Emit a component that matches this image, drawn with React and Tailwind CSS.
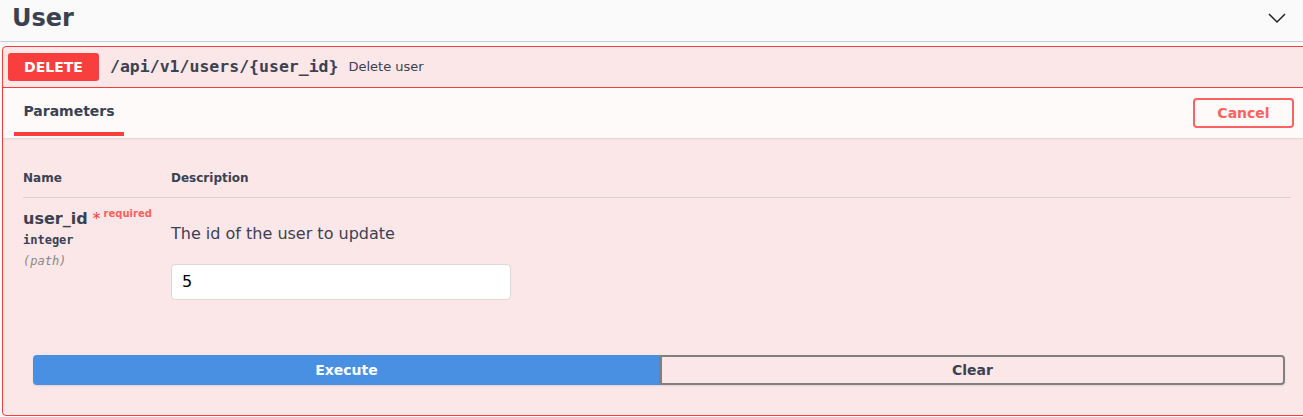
export default function App() {
  const sans = { fontFamily: '"DejaVu Sans", sans-serif' };
  const mono = { fontFamily: '"DejaVu Sans Mono", monospace' };
  return (
    <div className="w-[1303px] h-[417px] overflow-hidden bg-white text-[#3b4151]" style={sans}>
      <div className="h-[42px] bg-[#fafafa] flex items-center justify-between pl-[12px] pr-[16px] border-b border-[#c9cacd]">
        <h2 className="text-[24px] font-bold leading-none -mt-[6px]">User</h2>
        <svg width="20" height="20" viewBox="0 0 20 20" className="-mt-[6px]">
          <polyline points="2,6 10,14 18,6" fill="none" stroke="#222" strokeWidth="1.5" />
        </svg>
      </div>
      <div className="bg-[#fafafa] pt-[4px] w-[1320px]">
        <div className="ml-[2px] w-[1310px] border border-[#f93e3e] rounded-l-[4px] bg-[#fbe7e7]">
          <div className="h-[41px] flex items-center px-[5px] border-b border-[#f93e3e]">
            <div className="w-[91px] h-[28px] rounded-[3px] bg-[#f93e3e] text-white text-[14px] font-bold flex items-center justify-center">
              DELETE
            </div>
            <span className="ml-[11px] text-[16.5px] font-bold" style={mono}>/api/v1/users/{"{user_id}"}</span>
            <span className="ml-[10px] text-[13px]">Delete user</span>
          </div>
          <div className="h-[50px] w-[1300px] bg-[#fffafa] flex items-end justify-between pl-[11px] pr-[9px] shadow-[0_1px_2px_rgba(0,0,0,0.1)]">
            <div className="flex flex-col items-center">
              <span className="px-[9px] text-[14px] font-bold">Parameters</span>
              <div className="mt-[10px] mb-[2px] w-[110px] h-[4px] bg-[#f93e3e]" />
            </div>
            <button className="self-center w-[101px] h-[30px] border-2 border-[#ff6060] rounded-[4px] text-[#ff6060] text-[14px] font-bold bg-transparent" style={sans}>
              Cancel
            </button>
          </div>
          <div className="px-[20px] pt-[31px]">
            <div className="flex text-[12px] font-bold pb-[10px] border-b border-[#d8d2d4]">
              <div className="w-[148px]">Name</div>
              <div>Description</div>
            </div>
            <div className="flex pt-[11px]">
              <div className="w-[148px]">
                <div className="flex items-start">
                  <span className="text-[16px] font-bold leading-[20px]">user_id</span>
                  <span className="ml-[5px] text-[#f93e3e] text-[16px] leading-[20px]">*</span>
                  <span className="ml-[3px] text-[10px] font-bold text-[#ff6060] leading-[12px] mt-[-1px]">required</span>
                </div>
                <div className="mt-[3px] text-[12px] font-bold leading-[16px]" style={mono}>integer</div>
                <div className="mt-[5px] text-[12px] italic text-[#888] leading-[16px]" style={mono}>(path)</div>
              </div>
              <div className="pt-[15px]">
                <p className="text-[16px] leading-[20px]">The id of the user to update</p>
                <div className="mt-[20px] w-[340px] h-[36px] bg-white border border-[#d9d9d9] rounded-[4px] flex items-center px-[10px] text-[16px] text-black">
                  5
                </div>
              </div>
            </div>
          </div>
          <div className="flex pl-[30px] pt-[55px] pb-[30px]">
            <button className="w-[627px] h-[30px] bg-[#4990e2] text-white text-[14px] font-bold rounded-l-[4px] shadow-[0_1px_2px_rgba(0,0,0,0.1)]" style={sans}>
              Execute
            </button>
            <button className="w-[625px] h-[30px] border-2 border-[#808080] text-[#3b4151] text-[14px] font-bold rounded-r-[4px] bg-transparent shadow-[0_1px_2px_rgba(0,0,0,0.1)]" style={sans}>
              Clear
            </button>
          </div>
        </div>
      </div>
    </div>
  );
}
